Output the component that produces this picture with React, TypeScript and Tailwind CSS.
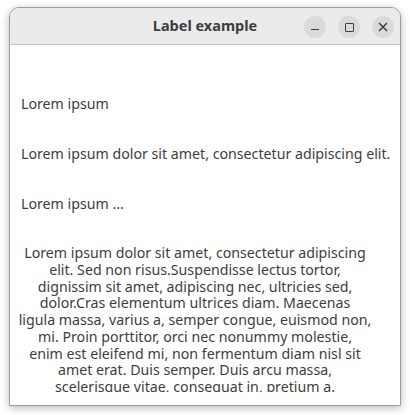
import React from "react";

const para = [
  "Lorem ipsum dolor sit amet, consectetur adipiscing",
  "elit. Sed non risus.Suspendisse lectus tortor,",
  "dignissim sit amet, adipiscing nec, ultricies sed,",
  "dolor.Cras elementum ultrices diam. Maecenas",
  "ligula massa, varius a, semper congue, euismod non,",
  "mi. Proin porttitor, orci nec nonummy molestie,",
  "enim est eleifend mi, non fermentum diam nisl sit",
  "amet erat. Duis semper. Duis arcu massa,",
  "scelerisque vitae, consequat in, pretium a.",
];

export default function App() {
  return (
    <div
      className="w-[410px] h-[415px] bg-white pt-[7px] pl-[9px] overflow-hidden"
      style={{ fontFamily: '"Noto Sans", "Open Sans", sans-serif' }}
    >
      <div className="w-[392px] h-[399px] flex flex-col rounded-t-[10px] border border-[#9c9c9c] bg-white overflow-hidden shadow-[0_2px_9px_rgba(0,0,0,0.28)]">
        <div className="relative h-[37px] shrink-0 bg-[#ebebeb] border-b border-[#c4c4c4] flex items-center justify-center">
          <span className="text-[14.5px] font-bold text-[#3d3d3d]">Label example</span>
          <div className="absolute right-[6px] top-[8px] flex gap-[12px]">
            <div className="w-[22px] h-[22px] rounded-full bg-[#dadada] flex items-center justify-center">
              <div className="w-[8px] h-[1.5px] bg-[#3d3d3d] mt-[5px]" />
            </div>
            <div className="w-[22px] h-[22px] rounded-full bg-[#dadada] flex items-center justify-center">
              <div className="w-[9px] h-[9px] border-[1.5px] border-[#3d3d3d] rounded-[1px]" />
            </div>
            <div className="w-[22px] h-[22px] rounded-full bg-[#dadada] flex items-center justify-center">
              <svg width="10" height="10" viewBox="0 0 10 10">
                <path d="M1 1L9 9M9 1L1 9" stroke="#3d3d3d" strokeWidth="1.5" />
              </svg>
            </div>
          </div>
        </div>
        <div className="flex-1 pl-[11px] pt-[50px] flex flex-col gap-[33px] text-[14.2px] text-[#3d3d3d]">
          <div className="leading-[17px] h-[17px] whitespace-nowrap">Lorem ipsum</div>
          <div className="leading-[17px] h-[17px] whitespace-nowrap">Lorem ipsum dolor sit amet, consectetur adipiscing elit.</div>
          <div className="leading-[17px] h-[17px] whitespace-nowrap">Lorem ipsum ...</div>
          <div className="ml-[-10px] w-[368px] h-[147px] overflow-hidden text-center leading-[16.75px]">
            {para.map((l, i) => (
              <div key={i} className="whitespace-nowrap">{l}</div>
            ))}
          </div>
        </div>
      </div>
    </div>
  );
}
